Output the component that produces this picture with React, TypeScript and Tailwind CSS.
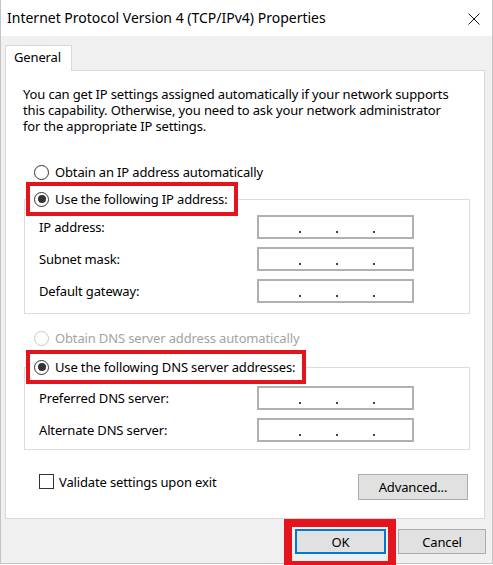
import React from 'react';

function Radio({ checked, disabled }: { checked?: boolean; disabled?: boolean }) {
  return (
    <span
      className={`w-[15px] h-[15px] rounded-full border bg-white shrink-0 flex items-center justify-center ${
        disabled ? 'border-[#c8c8c8]' : 'border-[#333333]'
      }`}
    >
      {checked && <span className="w-[8px] h-[8px] rounded-full bg-[#333333]" />}
    </span>
  );
}

function IpBox() {
  return (
    <div className="w-[157px] h-[24px] bg-white border-2 border-[#b0b0b0] flex pl-[40px] gap-[35px] pt-[14px]">
      <span className="w-[2px] h-[2px] bg-[#444444]" />
      <span className="w-[2px] h-[2px] bg-[#444444]" />
      <span className="w-[2px] h-[2px] bg-[#444444]" />
    </div>
  );
}

function FieldRow({ label }: { label: string }) {
  return (
    <div className="h-[32px] flex items-center pl-[14px]">
      <span className="w-[218px] whitespace-nowrap">{label}</span>
      <IpBox />
    </div>
  );
}

function Legend({ label }: { label: string }) {
  return (
    <legend className="ml-[1px] border-4 border-[#e3141c] bg-white">
      <div className="h-[26px] flex items-center gap-[6px] pl-[4px] pr-[7px] whitespace-nowrap">
        <Radio checked />
        <span>{label}</span>
      </div>
    </legend>
  );
}

export default function App() {
  return (
    <div className="w-[493px] h-[565px] overflow-hidden font-['Noto_Sans',sans-serif] text-[13px] leading-[16px] text-black">
      <div className="w-[493px] h-[564px] bg-[#f0f0f0] border-x border-b border-[#c4c4c4] flex flex-col">
        {/* Title bar */}
        <div className="h-[36px] shrink-0 bg-white flex items-center justify-between pl-[6px] pr-[12px]">
          <span className="text-[14px] whitespace-nowrap">Internet Protocol Version 4 (TCP/IPv4) Properties</span>
          <svg width="12" height="12" viewBox="0 0 12 12" className="mt-[1px]">
            <path d="M0.5 0.5 L11.5 11.5 M11.5 0.5 L0.5 11.5" stroke="#111" strokeWidth="1" fill="none" />
          </svg>
        </div>

        <div className="ml-[4px] mr-[7px] mt-[9px] tracking-[-0.15px]">
          {/* Tab strip */}
          <div className="flex">
            <div className="relative z-10 h-[26px] -mb-px bg-white border border-b-0 border-[#d9d9d9] pl-[8px] pr-[10px] pt-[3px]">
              General
            </div>
          </div>

          {/* Tab panel */}
          <div className="h-[449px] bg-white border border-[#d9d9d9] pl-[17px] pt-[15px]">
            <p className="whitespace-nowrap">
              You can get IP settings assigned automatically if your network supports
              <br />
              this capability. Otherwise, you need to ask your network administrator
              <br />
              for the appropriate IP settings.
            </p>

            <div className="mt-[28px] h-[20px] flex items-center gap-[6px] ml-[11px]">
              <Radio />
              <span>Obtain an IP address automatically</span>
            </div>

            <fieldset className="w-[446px] ml-[1px] border border-[#dcdcdc] pb-[6px]">
              <Legend label="Use the following IP address:" />
              <div className="-mt-[5px]">
                <FieldRow label="IP address:" />
                <FieldRow label="Subnet mask:" />
                <FieldRow label="Default gateway:" />
              </div>
            </fieldset>

            <div className="mt-[14px] h-[20px] flex items-center gap-[6px] ml-[11px] text-[#a3a3a3]">
              <Radio disabled />
              <span>Obtain DNS server address automatically</span>
            </div>

            <fieldset className="mt-[2px] w-[446px] ml-[1px] border border-[#dcdcdc] pb-[3px]">
              <Legend label="Use the following DNS server addresses:" />
              <div className="-mt-[2px]">
                <FieldRow label="Preferred DNS server:" />
                <FieldRow label="Alternate DNS server:" />
              </div>
            </fieldset>

            <div className="mt-[24px] w-[447px] flex items-start justify-between">
              <div className="h-[15px] ml-[16px] flex items-center gap-[5px]">
                <span className="w-[15px] h-[15px] border border-[#333333] bg-white" />
                <span>Validate settings upon exit</span>
              </div>
              <button className="w-[110px] h-[26px] mr-[2px] bg-[#e1e1e1] border border-[#adadad]">
                Advanced...
              </button>
            </div>
          </div>
        </div>

        {/* Dialog buttons */}
        <div className="flex justify-end items-start gap-[2px] pr-[6px] tracking-[-0.15px]">
          <div className="h-[50px] border-[8px] border-[#e3141c] pl-[3px] pr-[2px] pt-[2px]">
            <button className="w-[91px] h-[25px] bg-[#e1e1e1] border-2 border-[#0078d7]">OK</button>
          </div>
          <button className="mt-[10px] w-[88px] h-[25px] bg-[#e1e1e1] border border-[#adadad]">Cancel</button>
        </div>
      </div>
    </div>
  );
}
